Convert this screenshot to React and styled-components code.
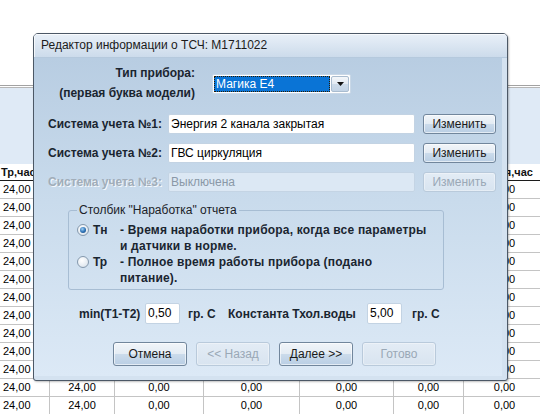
import React from "react";
import styled, { createGlobalStyle } from "styled-components";

const GlobalStyle = createGlobalStyle`
  html, body { margin: 0; padding: 0; background: #fff; }
  body { font-family: "Liberation Sans", Arial, sans-serif; }
  * { box-sizing: border-box; }
`;

const Screen = styled.div`
  position: relative;
  width: 540px;
  height: 414px;
  overflow: hidden;
  background: #fff;
`;

/* ---------- background report table ---------- */
const gridCols = "50px 65px 89px 96px 94px 70px 81px";

const Sheet = styled.div`
  width: 545px;
  display: flex;
  flex-direction: column;
  font-family: "Liberation Sans", Arial, sans-serif;
`;

const TopBlank = styled.div`
  height: 85px;
`;

const HeaderRule = styled.div`
  height: 3px;
  border-top: 1px solid #a2a2a2;
  border-bottom: 1px solid #b6b6b6;
`;

const HeaderBand = styled.div`
  height: 76px;
  background: #dfeaf6;
`;

const HeadRow = styled.div`
  display: grid;
  grid-template-columns: ${gridCols};
  height: 17px;
  border-bottom: 1px solid #1c1c1c;
  font-size: 11px;
  font-weight: bold;
  line-height: 16px;
  color: #111;
`;

const HeadCell = styled.div`
  white-space: nowrap;
  overflow: hidden;
  text-align: ${(p) => (p.$left ? "left" : "center")};
  padding-left: ${(p) => (p.$left ? "1px" : "0")};
`;

const DataRow = styled.div`
  display: grid;
  grid-template-columns: ${gridCols};
  height: 18px;
  border-bottom: 1px solid #c4c4c4;
  font-size: 11px;
  line-height: 17px;
  color: #000;
`;

const DataCell = styled.div`
  border-right: 1px solid #c4c4c4;
  white-space: nowrap;
  text-align: ${(p) => (p.$left ? "left" : "center")};
  padding-left: ${(p) => (p.$left ? "3px" : "0")};
  &:last-child { border-right: none; }
`;

/* ---------- dialog window ---------- */
const Window = styled.div`
  position: absolute;
  left: 33px;
  top: 33px;
  width: 475px;
  height: 348px;
  border: 1px solid #4c5866;
  border-radius: 5px 5px 3px 3px;
  background: #d4e2f0;
  display: flex;
  flex-direction: column;
  overflow: hidden;
  box-shadow: 1px 1px 2px rgba(0, 0, 0, 0.25);
  font-family: "Liberation Sans", Arial, sans-serif;
  color: #1a2530;
`;

const TitleBar = styled.div`
  flex: none;
  height: 24px;
  padding-left: 7px;
  background: linear-gradient(#e9f0f8, #ccdbeb);
  border-bottom: 1px solid #b5c9dd;
  box-shadow: inset 1px 1px 0 rgba(255, 255, 255, 0.7);
  font-size: 12px;
  line-height: 23px;
  color: #1b1b1b;
  white-space: nowrap;
`;

const Body = styled.div`
  flex: 1;
  margin: 0 5px 4px 0;
  padding-top: 5px;
  display: flex;
  flex-direction: column;
  background: linear-gradient(#b8cde2 0%, #c9dbec 45%, #dce9f6 100%);
`;

const TypeRow = styled.div`
  display: flex;
  height: 40px;
`;

const TypeLabel = styled.div`
  width: 161px;
  text-align: right;
  font-size: 12px;
  font-weight: bold;
  line-height: 20px;
  white-space: nowrap;
`;

const SelectBox = styled.div`
  margin: 11px 0 0 17px;
  width: 139px;
  height: 20px;
  display: flex;
  padding: 1px;
  gap: 1px;
  background: #fff;
  border: 1px solid #c9d8e7;
  border-radius: 2px;
`;

const SelectValue = styled.div`
  flex: 1;
  background: #0a74d6;
  outline: 1px dotted #2a1a00;
  outline-offset: -1px;
  color: #fff;
  font-size: 12px;
  line-height: 16px;
  padding-left: 2px;
  white-space: nowrap;
`;

const DropButton = styled.div`
  width: 18px;
  display: flex;
  align-items: center;
  justify-content: center;
  border: 1px solid #a9bccf;
  border-radius: 2px;
  background: linear-gradient(#f4f7fa, #e2eaf3 50%, #cddbe9 51%, #c3d4e6);
`;

const FieldRow = styled.div`
  display: flex;
  align-items: center;
  height: 20px;
  margin-top: ${(p) => p.$mt}px;
  padding-left: 14px;
`;

const RowLabel = styled.div`
  width: 120px;
  font-size: 12px;
  font-weight: bold;
  white-space: nowrap;
  color: ${(p) => (p.$disabled ? "#a1adb9" : "inherit")};
  text-shadow: ${(p) => (p.$disabled ? "1px 1px 0 #f4f8fc" : "none")};
`;

const TextBox = styled.div`
  width: ${(p) => p.$w}px;
  height: ${(p) => p.$h || 20}px;
  border: 1px solid ${(p) => (p.$disabled ? "#c4d4e4" : "#c3d3e3")};
  border-radius: 2px;
  background: ${(p) => (p.$disabled ? "#dce8f4" : "#fff")};
  color: ${(p) => (p.$disabled ? "#8a98a7" : "#000")};
  font-size: 12px;
  font-weight: normal;
  line-height: ${(p) => (p.$h || 20) - 2}px;
  padding-left: 2px;
  white-space: nowrap;
  overflow: hidden;
`;

const Button = styled.div`
  width: ${(p) => p.$w}px;
  height: ${(p) => p.$h}px;
  margin-left: ${(p) => p.$ml || 0}px;
  display: flex;
  align-items: center;
  justify-content: center;
  font-size: 12px;
  border-radius: 3px;
  white-space: nowrap;
  border: 1px solid ${(p) => (p.$disabled ? "#b9cadb" : "#71869c")};
  color: ${(p) => (p.$disabled ? "#9aa8b6" : "#1a1a1a")};
  background: ${(p) =>
    p.$disabled
      ? "linear-gradient(#e3ecf5, #d8e4f0)"
      : "linear-gradient(#f1f5f9 0%, #e4ecf4 48%, #cbdbeb 52%, #b9cee4 100%)"};
  box-shadow: ${(p) =>
    p.$disabled ? "inset 0 0 0 1px rgba(255,255,255,0.35)" : "inset 0 0 0 1px rgba(255,255,255,0.6)"};
`;

const GroupBox = styled.fieldset`
  margin: 11px 0 0 34px;
  width: 376px;
  padding: 5px 0 3px 8px;
  border: 1px solid #a7bdd3;
  border-radius: 3px;
  min-inline-size: 0;
`;

const GroupTitle = styled.legend`
  padding: 0 2px;
  font-size: 12px;
  line-height: 14px;
  color: #1b2228;
  white-space: nowrap;
`;

const RadioItem = styled.div`
  display: flex;
  align-items: flex-start;
  font-size: 12px;
  font-weight: bold;
  line-height: 16px;
  color: #1a2530;
`;

const RadioCircle = styled.div`
  flex: none;
  width: 12px;
  height: 12px;
  margin-top: 2px;
  border-radius: 50%;
  border: 1px solid #8599ad;
  background: radial-gradient(circle at 40% 35%, #ffffff, #e6ecf2 60%, #cdd7e1);
  display: flex;
  align-items: center;
  justify-content: center;
`;

const RadioDot = styled.div`
  width: 6px;
  height: 6px;
  border-radius: 50%;
  background: radial-gradient(circle at 40% 35%, #9fd0f5, #2a6fb4 55%, #163f6e);
`;

const RadioKey = styled.div`
  width: 27px;
  margin-left: 4px;
  white-space: nowrap;
`;

const RadioText = styled.div`
  white-space: nowrap;
  letter-spacing: 0.2px;
`;

const FieldsRow = styled.div`
  display: flex;
  align-items: center;
  height: 21px;
  margin-top: 13px;
  padding-left: 45px;
  font-size: 12px;
  font-weight: bold;
`;

const InlineLabel = styled.div`
  width: ${(p) => p.$w}px;
  margin-left: ${(p) => p.$ml || 0}px;
  white-space: nowrap;
`;

const ButtonsRow = styled.div`
  display: flex;
  gap: 9px;
  margin-top: 18px;
  padding-left: 79px;
`;

/* Rows 0..10 lie under the dialog: only the outer columns show there. */
const ROWS = 13;
const FIRST_UNCOVERED = 11;
const rowValues = ["24,00", "24,00", "0,00", "0,00", "0,00", "0,00", "0,00"];

export default function App() {
  return (
    <Screen>
      <GlobalStyle />
      <Sheet>
        <TopBlank />
        <HeaderRule />
        <HeaderBand />
        <HeadRow>
          <HeadCell $left>Тр,час</HeadCell>
          <HeadCell />
          <HeadCell />
          <HeadCell />
          <HeadCell />
          <HeadCell />
          <HeadCell>Время,час</HeadCell>
        </HeadRow>
        {Array.from({ length: ROWS }).map((_, i) => (
          <DataRow key={i}>
            {rowValues.map((v, c) => {
              const visible = i >= FIRST_UNCOVERED || c === 0 || c === rowValues.length - 1;
              return (
                <DataCell key={c} $left={c === 0}>
                  {visible ? v : ""}
                </DataCell>
              );
            })}
          </DataRow>
        ))}
      </Sheet>

      <Window>
        <TitleBar>Редактор информации о ТСЧ: M1711022</TitleBar>
        <Body>
          <TypeRow>
            <TypeLabel>
              Тип прибора:
              <br />
              (первая буква модели)
            </TypeLabel>
            <SelectBox>
              <SelectValue>Магика Е4</SelectValue>
              <DropButton>
                <svg width="7" height="4" viewBox="0 0 7 4">
                  <path d="M0 0h7L3.5 4z" fill="#111" />
                </svg>
              </DropButton>
            </SelectBox>
          </TypeRow>

          <FieldRow $mt={11}>
            <RowLabel>Система учета №1:</RowLabel>
            <TextBox $w={247}>Энергия 2 канала закрытая</TextBox>
            <Button $w={73} $h={20} $ml={8}>Изменить</Button>
          </FieldRow>
          <FieldRow $mt={9}>
            <RowLabel>Система учета №2:</RowLabel>
            <TextBox $w={247}>ГВС циркуляция</TextBox>
            <Button $w={73} $h={20} $ml={8}>Изменить</Button>
          </FieldRow>
          <FieldRow $mt={9}>
            <RowLabel $disabled>Система учета №3:</RowLabel>
            <TextBox $w={247} $disabled>Выключена</TextBox>
            <Button $w={73} $h={20} $ml={8} $disabled>Изменить</Button>
          </FieldRow>

          <GroupBox>
            <GroupTitle>Столбик "Наработка" отчета</GroupTitle>
            <RadioItem>
              <RadioCircle>
                <RadioDot />
              </RadioCircle>
              <RadioKey>Тн</RadioKey>
              <RadioText>
                - Время наработки прибора, когда все параметры
                <br />
                и датчики в норме.
              </RadioText>
            </RadioItem>
            <RadioItem>
              <RadioCircle />
              <RadioKey>Тр</RadioKey>
              <RadioText>
                - Полное время работы прибора (подано
                <br />
                питание).
              </RadioText>
            </RadioItem>
          </GroupBox>

          <FieldsRow>
            <InlineLabel $w={66}>min(T1-T2)</InlineLabel>
            <TextBox $w={35} $h={21}>0,50</TextBox>
            <InlineLabel $w={40} $ml={8}>гр. С</InlineLabel>
            <InlineLabel $w={139}>Константа Тхол.воды</InlineLabel>
            <TextBox $w={35} $h={21}>5,00</TextBox>
            <InlineLabel $w={40} $ml={10}>гр. С</InlineLabel>
          </FieldsRow>

          <ButtonsRow>
            <Button $w={74} $h={24}>Отмена</Button>
            <Button $w={74} $h={24} $disabled>&lt;&lt; Назад</Button>
            <Button $w={74} $h={24}>Далее &gt;&gt;</Button>
            <Button $w={74} $h={24} $disabled>Готово</Button>
          </ButtonsRow>
        </Body>
      </Window>
    </Screen>
  );
}
